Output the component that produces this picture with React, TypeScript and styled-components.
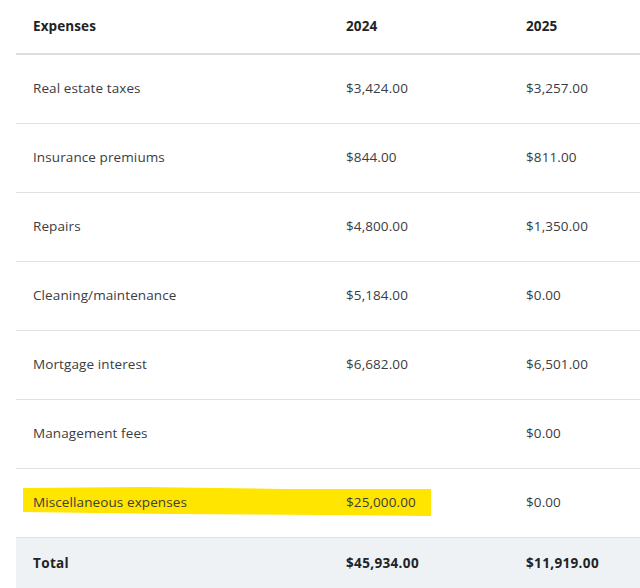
import React from "react";
import styled, { createGlobalStyle } from "styled-components";

const Global = createGlobalStyle`
  html, body { margin: 0; padding: 0; background: #fff; }
  body { font-family: "Open Sans", "Noto Sans", Arial, sans-serif; -webkit-font-smoothing: antialiased; }
`;

const Page = styled.div`
  padding-left: 16px;
  width: 640px;
  box-sizing: border-box;
`;

const Table = styled.div`
  display: grid;
  grid-template-columns: 313px 180px 1fr;
`;

const Row = styled.div<{ $variant?: "head" | "body" | "total" }>`
  display: contents;
  & > div {
    height: ${(p) => (p.$variant === "head" ? "51px" : p.$variant === "total" ? "49px" : "66px")};
    border-bottom: ${(p) =>
      p.$variant === "head" ? "2px solid #dcdddf" : p.$variant === "total" ? "none" : "1px solid #dfe0e2"};
    background: ${(p) => (p.$variant === "total" ? "#eff2f5" : "transparent")};
    font-weight: ${(p) => (p.$variant === "body" ? 400 : 700)};
    color: ${(p) => (p.$variant === "body" ? "#3b3c3f" : "#222326")};
    letter-spacing: ${(p) => (p.$variant === "total" ? "0.35px" : "0.1px")};
  }
`;

const Cell = styled.div`
  position: relative;
  display: flex;
  align-items: center;
  padding: 0 0 2px 17px;
  font-size: 13.5px;
  box-sizing: content-box;
`;

const Label = styled.span`
  position: relative;
  z-index: 1;
`;

const Highlight = styled.svg`
  position: absolute;
  left: 7px;
  top: 18px;
  width: 408px;
  height: 30px;
  z-index: 0;
`;

type Item = { label: string; y24: string; y25: string; mark?: boolean };

const items: Item[] = [
  { label: "Real estate taxes", y24: "$3,424.00", y25: "$3,257.00" },
  { label: "Insurance premiums", y24: "$844.00", y25: "$811.00" },
  { label: "Repairs", y24: "$4,800.00", y25: "$1,350.00" },
  { label: "Cleaning/maintenance", y24: "$5,184.00", y25: "$0.00" },
  { label: "Mortgage interest", y24: "$6,682.00", y25: "$6,501.00" },
  { label: "Management fees", y24: "", y25: "$0.00" },
  { label: "Miscellaneous expenses", y24: "$25,000.00", y25: "$0.00", mark: true },
];

export default function App() {
  return (
    <>
      <Global />
      <Page>
        <Table>
          <Row $variant="head">
            <Cell>Expenses</Cell>
            <Cell>2024</Cell>
            <Cell>2025</Cell>
          </Row>
          {items.map((it) => (
            <Row $variant="body" key={it.label}>
              <Cell>
                {it.mark && (
                  <Highlight viewBox="0 0 408 30" preserveAspectRatio="none">
                    <polygon points="0,1 120,0 260,2 408,2 408,29 300,28 150,27 0,25" fill="#ffe500" />
                  </Highlight>
                )}
                <Label>{it.label}</Label>
              </Cell>
              <Cell>
                <Label>{it.y24}</Label>
              </Cell>
              <Cell>{it.y25}</Cell>
            </Row>
          ))}
          <Row $variant="total">
            <Cell>Total</Cell>
            <Cell>$45,934.00</Cell>
            <Cell>$11,919.00</Cell>
          </Row>
        </Table>
      </Page>
    </>
  );
}
